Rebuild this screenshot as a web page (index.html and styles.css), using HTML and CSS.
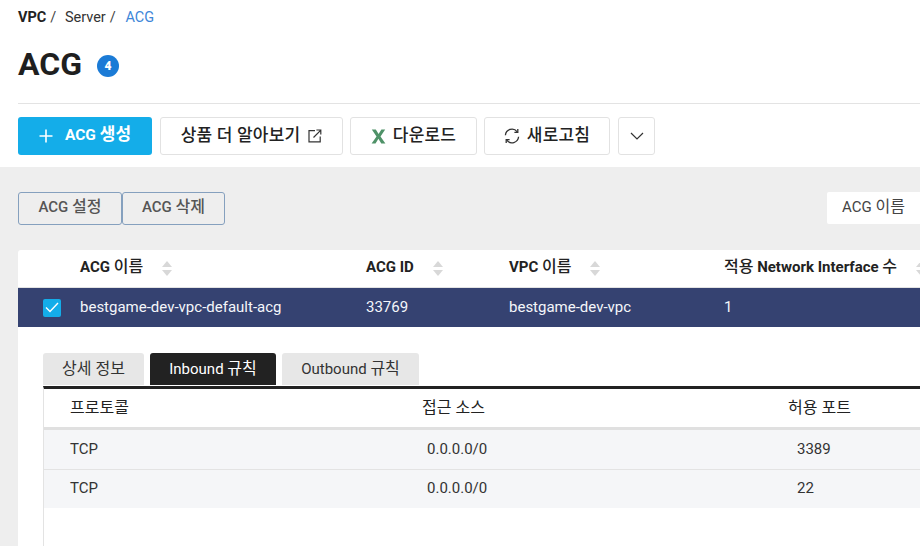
FILE: index.html
```html
<!DOCTYPE HTML>
<html>
<head>
<meta charset="utf-8">
<title>ACG</title>
<link rel="stylesheet" href="styles.css">
</head>
<body>
<div id="app">
    <header class="top">
        <nav class="crumbs">
            <b>VPC</b><span class="sep">/</span>
            <span>Server</span><span class="sep sep-last">/</span>
            <span class="current">ACG</span>
        </nav>
        <div class="title-row">
            <h1>ACG</h1>
            <span class="count">4</span>
        </div>
        <div class="toolbar">
            <button class="btn btn-create">
                <svg width="14" height="14" viewBox="0 0 14 14"><path d="M7 0.5v13M0.5 7h13" stroke="#fff" stroke-width="1.6" fill="none"/></svg>
                <span class="label">ACG <span class="ko">생성</span></span>
            </button>
            <button class="btn btn-more">
                <span class="label ko">상품 더 알아보기</span>
                <svg width="14" height="14" viewBox="0 0 14 14" fill="none" stroke="#333" stroke-width="1.2"><path d="M7 1.6H1v11.2h11.2V7.5"/><path d="M5.5 8.5L12.6 1.4M8.4 1h4.4v4.4"/></svg>
            </button>
            <button class="btn btn-download">
                <svg width="15" height="15" viewBox="0 0 15 15"><path d="M0.8 0.5h4l2.8 4.6 2.8-4.6h3.8L9.5 7.4l4.9 7.1h-4.1L7.4 9.8l-2.9 4.7H0.6l4.9-7.1z" fill="#4f9268"/></svg>
                <span class="label ko">다운로드</span>
            </button>
            <button class="btn btn-refresh">
                <svg width="16" height="16" viewBox="0 0 16 16" fill="none" stroke="#333" stroke-width="1.3"><path d="M1.4 7.2A6.6 6.6 0 0 1 13.2 3.8"/><path d="M14.6 8.8A6.6 6.6 0 0 1 2.8 12.2"/><path d="M13.8 1v3.4h-3.4" /><path d="M2.2 15v-3.4h3.4"/></svg>
                <span class="label ko">새로고침</span>
            </button>
            <button class="btn btn-caret">
                <svg width="14" height="8" viewBox="0 0 14 8" fill="none" stroke="#333" stroke-width="1.2"><path d="M1 1l6 6 6-6"/></svg>
            </button>
        </div>
    </header>

    <section class="content">
        <div class="actions">
            <div class="action-group">
                <button class="action">ACG <span class="ko">설정</span></button>
                <button class="action">ACG <span class="ko">삭제</span></button>
            </div>
            <div class="filter">ACG <span class="ko">이름</span></div>
        </div>

        <div class="card">
            <div class="row row-head">
                <div class="cell"></div>
                <div class="cell"><span>ACG <span class="ko">이름</span></span><i class="sort"></i></div>
                <div class="cell"><span>ACG ID</span><i class="sort"></i></div>
                <div class="cell"><span>VPC <span class="ko">이름</span></span><i class="sort"></i></div>
                <div class="cell"><span><span class="ko">적용</span> Network Interface <span class="ko">수</span></span><i class="sort"></i></div>
            </div>
            <div class="row row-selected">
                <div class="cell cell-check">
                    <span class="check">
                        <svg width="14" height="11" viewBox="0 0 14 11" fill="none" stroke="#fff" stroke-width="1.4"><path d="M1 5.5l4 4 8-8.5"/></svg>
                    </span>
                </div>
                <div class="cell">bestgame-dev-vpc-default-acg</div>
                <div class="cell">33769</div>
                <div class="cell">bestgame-dev-vpc</div>
                <div class="cell">1</div>
            </div>

            <div class="detail">
                <div class="tabs">
                    <div class="tab tab-info"><span class="ko">상세 정보</span></div>
                    <div class="tab tab-in active">Inbound <span class="ko">규칙</span></div>
                    <div class="tab tab-out">Outbound <span class="ko">규칙</span></div>
                </div>
                <div class="rules">
                    <div class="rule rule-head">
                        <div class="ko">프로토콜</div>
                        <div class="ko">접근 소스</div>
                        <div class="ko">허용 포트</div>
                    </div>
                    <div class="rule rule-body">
                        <div>TCP</div>
                        <div class="src">0.0.0.0/0</div>
                        <div class="port">3389</div>
                    </div>
                    <div class="rule rule-body">
                        <div>TCP</div>
                        <div class="src">0.0.0.0/0</div>
                        <div class="port">22</div>
                    </div>
                </div>
            </div>
        </div>
    </section>
</div>
</body>
</html>
```

FILE: styles.css
```css
* {
    box-sizing: border-box;
}

html, body {
    margin: 0;
    padding: 0;
    height: 546px;
    overflow: hidden;
}

body {
    background: #fff;
    color: #222;
    font-family: Roboto, "Noto Sans CJK KR", sans-serif;
    font-size: 15px;
}

.ko {
    font-size: 16px;
    font-weight: 400;
    line-height: 1;
}

#app {
    width: 920px;
    height: 546px;
    overflow: hidden;
    display: flex;
    flex-direction: column;
}

/* Top area */
.top {
    height: 167px;
    flex: none;
    padding-left: 18px;
}

.crumbs {
    height: 34px;
    line-height: 35px;
    font-size: 14.5px;
    color: #333;
    white-space: nowrap;
}

.crumbs b {
    color: #222;
    font-weight: 700;
}

.crumbs .sep {
    margin: 0 5px 0 4px;
    color: #444;
}

.crumbs .sep-last {
    margin-right: 6px;
}

.crumbs .current {
    color: #3d86d8;
}

.title-row {
    height: 70px;
    display: flex;
    align-items: center;
    gap: 15px;
    border-bottom: 1px solid #e3e3e3;
    padding-bottom: 9px;
}

h1 {
    margin: 0;
    font-size: 32px;
    font-weight: 700;
    color: #1f1f1f;
}

.count {
    width: 22px;
    height: 22px;
    border-radius: 50%;
    background: #1b7bd6;
    color: #fff;
    font-size: 12px;
    font-weight: 900;
    display: flex;
    align-items: center;
    justify-content: center;
    margin-top: 3px;
}

.toolbar {
    display: flex;
    gap: 7px;
    margin-top: 13px;
}

.btn {
    height: 38px;
    border: 1px solid #e2e2e2;
    border-radius: 3px;
    background: #fff;
    color: #222;
    font-family: inherit;
    font-size: 15px;
    font-weight: 500;
    display: flex;
    align-items: center;
    justify-content: center;
    padding: 0;
}

.btn .label {
    margin-top: -2px;
}

.btn .ko {
    font-size: 17px;
    font-weight: 500;
    letter-spacing: 0.2px;
}

.btn-create {
    width: 134px;
    gap: 12px;
    border: none;
    background: #14ade9;
    color: #fff;
    font-size: 15.5px;
    font-weight: 700;
    margin-right: 1px;
}

.btn-create .ko {
    font-size: 17px;
    font-weight: 700;
    letter-spacing: 0;
}

.btn-more {
    width: 183px;
    gap: 8px;
}

.btn-download {
    width: 127px;
    gap: 7px;
}

.btn-refresh {
    width: 126px;
    gap: 7px;
}

.btn-caret {
    width: 37px;
    margin-left: 1px;
}

/* Gray content area */
.content {
    flex: 1;
    background: #eee;
    padding: 25px 0 0 18px;
    min-height: 0;
}

.actions {
    display: flex;
    justify-content: space-between;
    height: 33px;
    margin-bottom: 25px;
}

.action-group {
    display: flex;
}

.action {
    width: 104px;
    height: 33px;
    border: 1px solid #85a0be;
    border-radius: 3px;
    background: #eee;
    color: #555;
    font-family: inherit;
    font-size: 15px;
    font-weight: 500;
    padding: 0 0 3px;
}

.action .ko {
    font-weight: 500;
}

.action + .action {
    width: 103px;
}

.filter {
    width: 93px;
    height: 32px;
    background: #fff;
    border-radius: 2px 0 0 2px;
    color: #444;
    line-height: 30px;
    padding-left: 15px;
}

/* Main table */
.card {
    background: #fff;
    border-radius: 3px 0 0 0;
    height: 296px;
}

.row {
    display: grid;
    grid-template-columns: 62px 286px 143px 215px 1fr;
    align-items: center;
    white-space: nowrap;
}

.row-head {
    height: 38px;
    font-weight: 700;
    color: #222;
    border-bottom: 1px solid #e3e3e3;
}

.row-head .cell > span {
    margin-top: -3px;
}

.row-head .ko {
    font-weight: 500;
}

.row-selected {
    height: 39px;
    background: #354271;
    color: #f4f6fa;
}

.row-selected .cell {
    padding-bottom: 2px;
}

.cell {
    display: flex;
    align-items: center;
}

.row-selected .cell-check {
    padding: 0 0 0 25px;
}

.check {
    width: 18px;
    height: 18px;
    background: #14ade9;
    border-radius: 2px;
    display: flex;
    align-items: center;
    justify-content: center;
}

.sort {
    display: inline-block;
    width: 11px;
    height: 15px;
    margin-left: 19px;
    position: relative;
}

.sort::before,
.sort::after {
    content: "";
    position: absolute;
    left: 0;
    border-left: 5.5px solid transparent;
    border-right: 5.5px solid transparent;
}

.sort::before {
    top: 0;
    border-bottom: 6px solid #d8d8d8;
}

.sort::after {
    bottom: 0;
    border-top: 6px solid #d8d8d8;
}

/* Detail under the selected row */
.detail {
    padding: 26px 0 0 25px;
}

.tabs {
    display: flex;
    gap: 6px;
    height: 32px;
}

.tab {
    height: 32px;
    line-height: 32px;
    background: #e7e7e7;
    border-radius: 3px 3px 0 0;
    color: #333;
    text-align: center;
    white-space: nowrap;
}

.tab-info {
    width: 101px;
}

.tab-in {
    width: 126px;
}

.tab-out {
    width: 137px;
}

.tab.active {
    background: #222;
    color: #fff;
}

.rules {
    margin-top: 1px;
    border-top: 3px solid #222;
    border-left: 1px solid #e3e3e3;
    height: 160px;
}

.rule {
    display: grid;
    grid-template-columns: 352px 366px 1fr;
    padding-left: 26px;
    align-items: center;
}

.rule-head {
    height: 41px;
    border-bottom: 3px solid #e0e0e0;
    color: #222;
}

.rule-body {
    height: 39px;
    background: #f5f6f8;
    color: #333;
    padding-bottom: 2px;
}

.rule-body + .rule-body {
    border-top: 1px solid #e3e3e3;
}

.src {
    padding-left: 5px;
}

.port {
    padding-left: 9px;
}
```
